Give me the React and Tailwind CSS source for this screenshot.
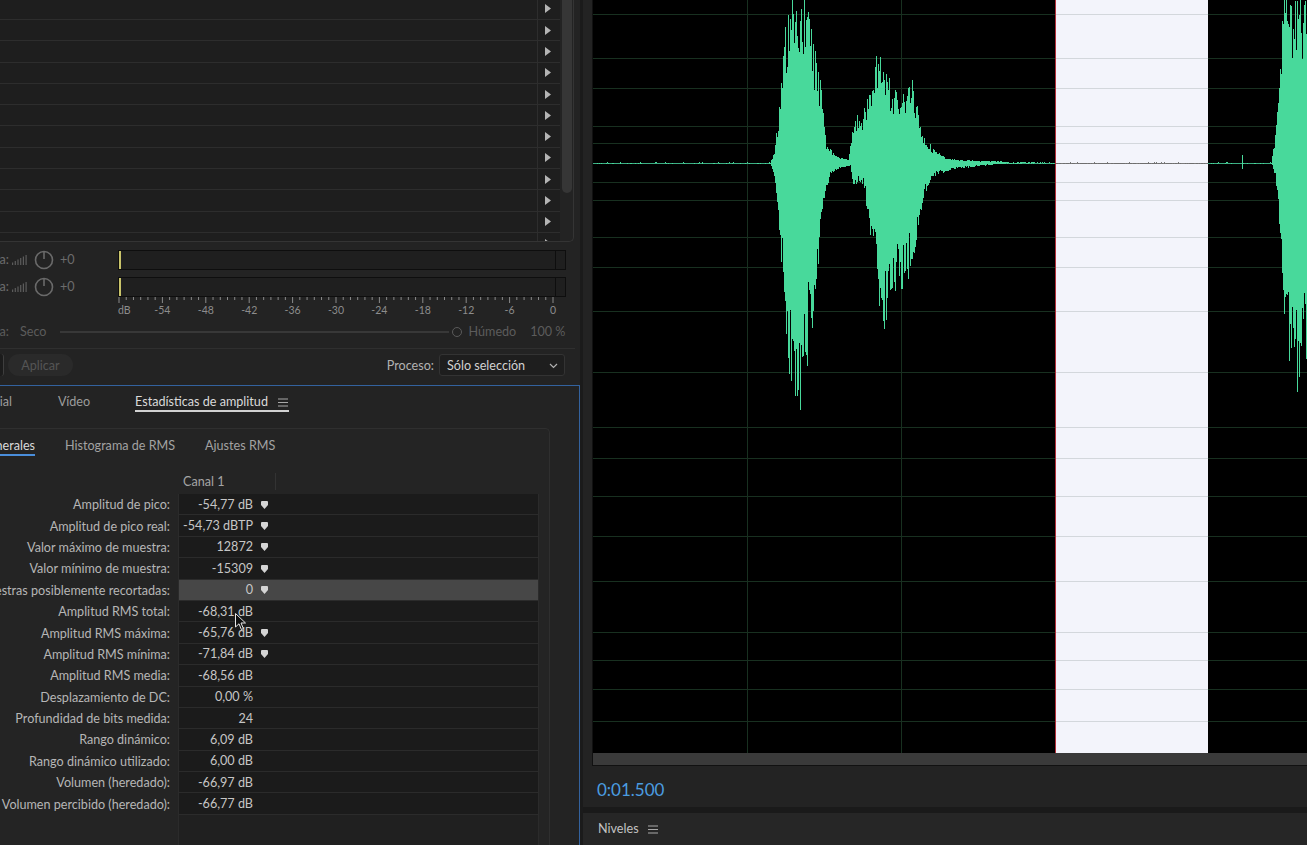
import { useMemo } from "react"

// ------------
// DATA
// ------------

const STATS = [
    { label: "Amplitud de pico:", value: "-54,77 dB", mark: true },
    { label: "Amplitud de pico real:", value: "-54,73 dBTP", mark: true },
    { label: "Valor máximo de muestra:", value: "12872", mark: true },
    { label: "Valor mínimo de muestra:", value: "-15309", mark: true },
    { label: "Muestras posiblemente recortadas:", value: "0", mark: true, active: true },
    { label: "Amplitud RMS total:", value: "-68,31 dB" },
    { label: "Amplitud RMS máxima:", value: "-65,76 dB", mark: true },
    { label: "Amplitud RMS mínima:", value: "-71,84 dB", mark: true },
    { label: "Amplitud RMS media:", value: "-68,56 dB" },
    { label: "Desplazamiento de DC:", value: "0,00 %" },
    { label: "Profundidad de bits medida:", value: "24" },
    { label: "Rango dinámico:", value: "6,09 dB" },
    { label: "Rango dinámico utilizado:", value: "6,00 dB" },
    { label: "Volumen (heredado):", value: "-66,97 dB" },
    { label: "Volumen percibido (heredado):", value: "-66,77 dB" },
]

const METER_LABELS = ["dB", "-54", "-48", "-42", "-36", "-30", "-24", "-18", "-12", "-6", "0"]

// horizontal grid of the waveform (screen y)
const GRID_Y = [14, 58, 88, 126, 143, 182, 200, 237, 267, 311, 372, 427, 458, 496, 536, 581, 632, 660, 689, 721]
const CENTER = 163
const WAVE_X = 593
const SEL_A = 1055
const SEL_B = 1208

// envelopes, [screen x, pixels from center]
const TOP_ENV = [
    [770, 0], [773, 8], [776, 30], [779, 60], [782, 100], [786, 150], [789, 170], [807, 170], [812, 130],
    [817, 106], [821, 76], [826, 20], [835, 8], [848, 4], [853, 40], [856, 50], [860, 45], [866, 62],
    [872, 96], [879, 126], [886, 92], [891, 82], [900, 74], [905, 70], [913, 86], [918, 56], [923, 32],
    [932, 16], [945, 6], [960, 3], [1000, 2], [1010, 0],
    [1271, 0], [1275, 30], [1279, 75], [1283, 170], [1310, 170],
]
const BOT_ENV = [
    [770, 0], [773, 10], [776, 40], [782, 118], [786, 200], [795, 242], [800, 248], [807, 206], [816, 140],
    [823, 40], [830, 12], [840, 5], [850, 3], [853, 24], [858, 20], [863, 22], [870, 72], [877, 132],
    [884, 178], [891, 132], [905, 132], [909, 116], [918, 72], [923, 38], [932, 15], [951, 7], [980, 3], [1010, 0],
    [1271, 0], [1275, 14], [1279, 70], [1283, 142], [1290, 216], [1297, 238], [1300, 206], [1310, 190],
]

function makeRand(seed) {
    let s = seed
    return () => {
        s = (s * 16807) % 2147483647
        return (s - 1) / 2147483646
    }
}

// linear interpolation between envelope points, zero outside
function envAt(pts, x) {
    for (let i = 1; i < pts.length; i++) {
        const [x0, y0] = pts[i - 1]
        const [x1, y1] = pts[i]
        if (x >= x0 && x <= x1) return y0 + (y1 - y0) * (x - x0) / (x1 - x0)
    }
    return 0
}

// ------------
// COMPONENTS
// ------------

function Marker() {
    return (
        <svg width="7" height="8" viewBox="0 0 7 8" className="ml-[8px] shrink-0">
            <path d="M1 0 H6 Q7 0 7 1 V4 L3.5 8 L0 4 V1 Q0 0 1 0 Z" fill="#d4d4d4" />
        </svg>
    )
}

function Hamburger() {
    return (
        <svg width="10" height="9" viewBox="0 0 10 9" className="shrink-0">
            <path d="M0 1 H10 M0 4.5 H10 M0 8 H10" stroke="#a8a8a8" strokeWidth="1.1" />
        </svg>
    )
}

function MeterRow() {
    return (
        <div className="flex items-center h-[20px]">
            <div className="w-[118px] flex items-center text-[#6c6c6c]">
                <div className="w-[9px] overflow-hidden flex justify-end whitespace-nowrap">Entrada:</div>
                <svg width="16" height="10" viewBox="0 0 16 10" className="ml-[3px]">
                    {[0, 1, 2, 3, 4, 5].map(i => (
                        <rect key={i} x={i * 2.7} y={9 - (i + 1) * 1.5} width="1.2" height={(i + 1) * 1.5 + 1} fill="#5c5c5c" />
                    ))}
                </svg>
                <svg width="20" height="20" viewBox="0 0 20 20" className="ml-[6px]">
                    <circle cx="10" cy="10" r="8.5" fill="none" stroke="#6a6a6a" strokeWidth="1.6" />
                    <path d="M10 1.5 V9" stroke="#6a6a6a" strokeWidth="1.6" />
                </svg>
                <span className="ml-[6px]">+0</span>
            </div>
            <div className="w-[448px] h-[20px] border border-[#0e0e0e] bg-[#1f1f1f] flex">
                <div className="w-[2px] h-full bg-[#c9c46a]" />
                <div className="flex-1" />
                <div className="w-[1px] h-full bg-[#0e0e0e] mr-[9px]" />
            </div>
        </div>
    )
}

function MeterScale() {
    const x0 = 119
    const step = (553 - 119) / 60
    return (
        <svg width="580" height="22" className="block">
            {Array.from({ length: 61 }).map((_, i) => {
                const major = i % 6 === 0
                const x = x0 + i * step
                return <line key={i} x1={x} x2={x} y1="0" y2={major ? 6 : 3} stroke="#8a8a8a" strokeWidth="1" />
            })}
            {METER_LABELS.map((l, i) => (
                <text
                    key={l}
                    x={i === 0 ? 118 : x0 + i * 6 * step}
                    y="17"
                    fontSize="10.5"
                    fill="#8c8c8c"
                    textAnchor={i === 0 ? "start" : "middle"}
                    fontFamily="Lato, sans-serif"
                >{l}</text>
            ))}
        </svg>
    )
}

function Waveform() {
    const paths = useMemo(() => {
        const rand = makeRand(7)
        let green = ""
        let gray = ""
        for (let x = WAVE_X; x < 1307; x++) {
            let t = envAt(TOP_ENV, x)
            let b = envAt(BOT_ENV, x)
            let base = 0.6
            if (x > 845 && x < 1060) base = 0.6 + 1.8 * (1 - (x - 845) / 215)
            if (x === 1242) { t = 10; b = 7 }
            const ft = rand() < 0.4 ? 0.88 + 0.12 * rand() : 0.6 + 0.28 * rand()
            const fb = rand() < 0.4 ? 0.88 + 0.12 * rand() : 0.6 + 0.28 * rand()
            const y1 = CENTER - Math.max(t * ft, base * rand())
            const y2 = CENTER + Math.max(b * fb, base * rand())
            const seg = `M${x - WAVE_X + 0.5} ${y1.toFixed(1)}V${y2.toFixed(1)}`
            if (x >= SEL_A && x <= SEL_B) gray += seg
            else green += seg
        }
        return { green, gray }
    }, [])

    const w = 1307 - WAVE_X
    const sa = SEL_A - WAVE_X
    const sb = SEL_B - WAVE_X
    return (
        <svg width={w} height="753" className="block" shapeRendering="crispEdges">
            <rect x="0" y="0" width={w} height="753" fill="#000" />
            {GRID_Y.map(y => (
                <line key={y} x1="0" x2={w} y1={y + 0.5} y2={y + 0.5} stroke="#183020" />
            ))}
            <line x1="154.5" x2="154.5" y1="0" y2="753" stroke="#183020" />
            <line x1="308.5" x2="308.5" y1="0" y2="753" stroke="#183020" />
            <rect x={sa} y="0" width={sb - sa} height="753" fill="#f3f4fb" />
            {GRID_Y.map(y => (
                <line key={y} x1={sa} x2={sb} y1={y + 0.5} y2={y + 0.5} stroke="#d3d7dc" />
            ))}
            <line x1={sa + 0.5} x2={sa + 0.5} y1="0" y2="753" stroke="#b3303c" />
            <line x1="0" x2={sa} y1={CENTER + 0.5} y2={CENTER + 0.5} stroke="#3cae83" />
            <line x1={sb} x2={w} y1={CENTER + 0.5} y2={CENTER + 0.5} stroke="#3cae83" />
            <line x1={sa + 1} x2={sb} y1={CENTER + 0.5} y2={CENTER + 0.5} stroke="#6e6e6e" />
            <path d={paths.green} stroke="#48d99b" strokeWidth="1" fill="none" />
            <path d={paths.gray} stroke="#7a7a7a" strokeWidth="1" fill="none" />
        </svg>
    )
}

function StatRow({ label, value, mark, active }) {
    return (
        <div className="flex h-[21.4px]">
            <div className="w-[178px] pr-[8px] pt-[1px] flex items-center justify-end overflow-hidden whitespace-nowrap text-[#b6b6b6]">
                {label}
            </div>
            <div className={`w-[361px] pt-[1px] flex items-center border-l border-r border-b border-[#2b2b2b] ${active ? "bg-[#474747]" : "bg-[#1b1b1b]"}`}>
                <span className="w-[74px] text-right text-[#c6c6c6] whitespace-nowrap">{value}</span>
                {mark && <Marker />}
            </div>
        </div>
    )
}

// ------------
// App
// ------------
export default function App() {
    return (
        <div className="w-[1307px] h-[845px] overflow-hidden flex bg-[#1a1a1a] font-['Lato',sans-serif] text-[12.6px] leading-[16px]">

            {/* left column */}
            <div className="w-[580px] shrink-0 flex flex-col bg-[#232323]">

                {/* effect list */}
                <div className="w-[574px] h-[242px] flex border-r border-b border-[#343434] rounded-br-[5px] overflow-hidden">
                    <div className="w-[560px] bg-[#1e1e1e] -mt-[1.3px]">
                        {Array.from({ length: 12 }).map((_, i) => (
                            <div key={i} className="h-[21.3px] flex border-b border-[#2d2d2d]">
                                <div className="flex-1" />
                                <div className="w-[23px] border-l border-[#2d2d2d] flex items-center pl-[7px]">
                                    <svg width="6" height="9" viewBox="0 0 6 9"><path d="M0 0 L6 4.5 L0 9 Z" fill="#b4b4b4" /></svg>
                                </div>
                            </div>
                        ))}
                    </div>
                    <div className="w-[13px] pl-[2px] pr-[1px]">
                        <div className="w-[10px] h-[193px] bg-[#363636] rounded-b-[5px]" />
                    </div>
                </div>

                {/* meters */}
                <div className="mt-[8px]"><MeterRow /></div>
                <div className="mt-[7px]"><MeterRow /></div>
                <MeterScale />

                {/* dry / wet */}
                <div className="mt-[4px] h-[16px] pt-[1px] flex items-center text-[#5c5c5c]">
                    <div className="w-[9px] overflow-hidden flex justify-end whitespace-nowrap">Mezcla:</div>
                    <span className="ml-[11px]">Seco</span>
                    <div className="ml-[13px] w-[389px] h-[2px] bg-[#383838]" />
                    <div className="ml-[3px] w-[10px] h-[10px] rounded-full border border-[#5a5a5a]" />
                    <span className="ml-[7px]">Húmedo</span>
                    <span className="ml-[14px]">100 %</span>
                </div>

                <div className="mt-[9px] w-[575px] h-[1px] bg-[#2f2f2f]" />

                {/* apply row */}
                <div className="mt-[5px] h-[22px] flex items-center pr-[15px]">
                    <div className="w-[4px] h-[22px] bg-[#1c1c1c] border-r border-[#3e3e3e] rounded-r-[3px]" />
                    <div className="ml-[4px] w-[65px] h-[22px] pt-[1px] rounded-full bg-[#2a2a2a] text-[#555] flex items-center justify-center">Aplicar</div>
                    <span className="ml-auto text-[#b2b2b2] mr-[5px] pt-[1px]">Proceso:</span>
                    <div className="w-[126px] h-[22px] pt-[1px] bg-[#1e1e1e] border border-[#333] rounded-[3px] flex items-center pl-[7px] pr-[6px] text-[#d2d2d2]">
                        <span>Sólo selección</span>
                        <svg width="9" height="6" viewBox="0 0 9 6" className="ml-auto"><path d="M1 1 L4.5 4.5 L8 1" stroke="#b0b0b0" strokeWidth="1.2" fill="none" /></svg>
                    </div>
                </div>

                {/* amplitude statistics panel */}
                <div className="mt-[9px] flex-1 flex flex-col border-t border-r border-[#33629e] bg-[#232323] overflow-hidden">
                    <div className="pt-[8px] flex items-start whitespace-nowrap">
                        <div className="w-[12px] overflow-hidden flex justify-end text-[#9c9c9c] pb-[2px]">Espacial</div>
                        <span className="ml-[46px] text-[#9c9c9c]">Vídeo</span>
                        <div className="ml-[45px] flex items-center gap-[10px] border-b-2 border-[#d2d2d2] pr-[1px]">
                            <span className="text-[#dadada]">Estadísticas de amplitud</span>
                            <Hamburger />
                        </div>
                    </div>

                    <div className="mt-[16px] w-[551px] -ml-[1px] flex-1 flex flex-col border-t border-r border-[#2f2f2f] rounded-tr-[5px] bg-[#242424]">
                        <div className="pt-[9px] flex items-start whitespace-nowrap pl-[1px]">
                            <div className="w-[35px] overflow-hidden flex justify-end text-[#dadada] border-b-2 border-[#4a8edb]">Generales</div>
                            <span className="ml-[30px] text-[#a2a2a2]">Histograma de RMS</span>
                            <span className="ml-[30px] text-[#a2a2a2]">Ajustes RMS</span>
                        </div>

                        <div className="mt-[17px] h-[17px] flex items-center pl-[1px]">
                            <div className="w-[178px]" />
                            <div className="w-[98px] pl-[5px] pt-[1px] text-[#a4a4a4] border-r border-[#333] h-full flex items-center">Canal 1</div>
                        </div>

                        <div className="mt-[4px] flex-1 flex flex-col pl-[1px] relative">
                            {STATS.map(s => <StatRow key={s.label} {...s} />)}
                            <div className="flex flex-1">
                                <div className="w-[178px]" />
                                <div className="w-[361px] border-l border-r border-[#2b2b2b] bg-[#202020]" />
                            </div>
                            {/* mouse pointer */}
                            <svg width="12" height="18" viewBox="0 0 12 18" className="absolute left-[236px] top-[119px]">
                                <path d="M0.5 0.5 L0.5 14 L4 10.8 L6.4 16.5 L8.4 15.6 L6 10 L10.5 10 Z" fill="#111" stroke="#e8e8e8" strokeWidth="1" />
                            </svg>
                        </div>
                    </div>
                </div>
            </div>

            {/* right column */}
            <div className="flex-1 flex flex-col bg-[#232323] border-l-[3px] border-[#1b1b1b]">
                <div className="ml-[9px] flex flex-col border-l border-b border-[#111]">
                    <Waveform />
                    <div className="h-[12px] bg-[#3a3a3a]" />
                </div>
                <div className="h-[41px] flex items-center pl-[14px] pt-[6px] text-[17px] text-[#4b9de0]">0:01.500</div>
                <div className="h-[6px] bg-[#1a1a1a]" />
                <div className="flex-1 bg-[#262626] pt-[8px] pl-[15px] flex items-start gap-[9px]">
                    <span className="text-[#c2c2c2]">Niveles</span>
                    <div className="mt-[4px]"><Hamburger /></div>
                </div>
            </div>
        </div>
    )
}
